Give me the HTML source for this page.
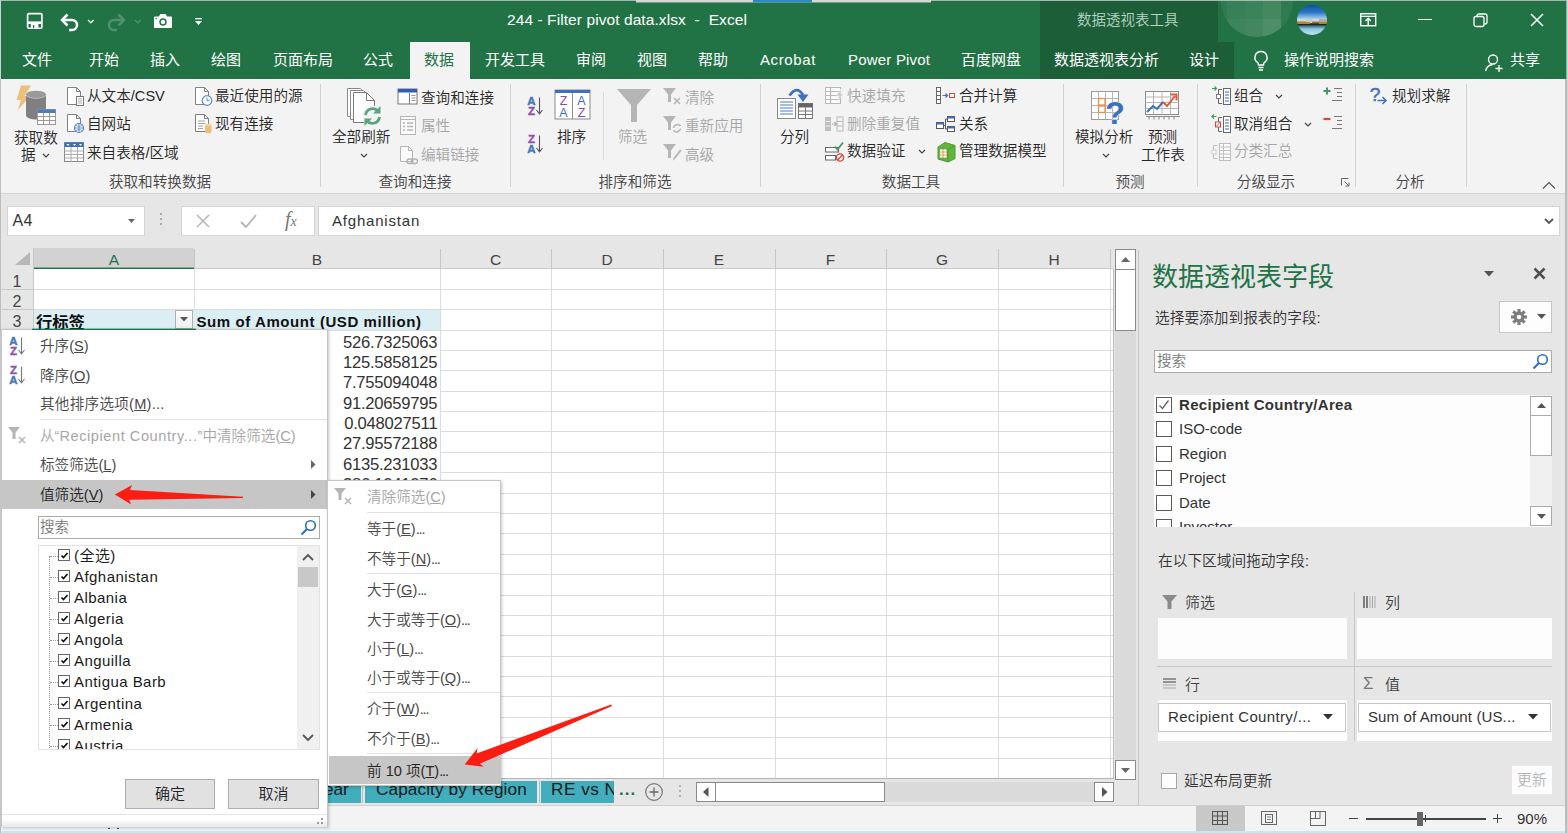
<!DOCTYPE html>
<html lang="zh-CN"><head><meta charset="utf-8"><title>244 - Filter pivot data.xlsx - Excel</title>
<style>
*{box-sizing:border-box;margin:0;padding:0}
html,body{width:1567px;height:833px;overflow:hidden}
body{position:relative;background:#e6e6e6;font-family:"Liberation Sans","Noto Sans CJK SC",sans-serif;font-size:15px;color:#262626;font-weight:350}
.abs,.t{position:absolute;white-space:nowrap}
.t{line-height:20px;height:20px}
#titlebar{position:absolute;left:0;top:0;width:1567px;height:79px;background:#217346}
#ctx{position:absolute;left:1040px;top:0;width:178px;height:79px;background:#1b5e38}
#ctx2{position:absolute;left:1218px;top:42px;width:16px;height:37px;background:#1b5e38}
.tab{position:absolute;top:50px;height:20px;line-height:20px;color:#fff;font-size:15px;white-space:nowrap;font-weight:400}
#acttab{position:absolute;left:410px;top:42px;width:60px;height:38px;background:#f3f3f3}
#ribbon{position:absolute;left:0;top:79px;width:1567px;height:115px;background:#f3f3f3;border-bottom:1px solid #d2d2d2}
.rl{position:absolute;font-size:14.600px;line-height:20px;height:20px;white-space:nowrap;color:#262626}
.dis{color:#a6a6a6}
.gl{position:absolute;top:172px;font-size:14.6px;line-height:20px;height:20px;white-space:nowrap;color:#444;transform:translateX(-50%)}
.gsep{position:absolute;top:84px;width:1px;height:103px;background:#d2d2d2}
</style></head><body>
<div id="titlebar"></div>
<div id="ctx"></div><div id="ctx2"></div>
<div id="acttab"></div>
<div id="ribbon"></div>
<!--TABS-S-->
<div class="abs" style="left:0;top:0;width:1567px;height:1px;background:#a9b8b0"></div>
<div class="abs" style="left:0;top:0;width:1px;height:79px;background:#d3ccd0"></div>
<div class="abs" style="left:636px;top:0;width:295px;height:2px;background:#d6d6d6"></div><div class="abs" style="left:636px;top:2px;width:295px;height:1px;background:#d6d6d6;opacity:.45"></div>
<div class="abs" style="left:753px;top:0;width:59px;height:2px;background:#2e8bc0"></div><div class="abs" style="left:753px;top:2px;width:59px;height:1px;background:#2e8bc0;opacity:.45"></div>
<!-- quick access icons -->
<svg class="abs" style="left:24px;top:11px" width="20" height="20" viewBox="0 0 20 20"><rect x="3.600" y="2.600" width="14.300" height="14.600" rx="1.200" fill="none" stroke="#fff" stroke-width="1.600"/><rect x="3.600" y="10.400" width="14.300" height="2.600" fill="#fff"/><rect x="6.800" y="12.800" width="7.600" height="4.400" fill="#fff"/><rect x="8.900" y="14" width="1.400" height="3.200" fill="#217346"/></svg>
<svg class="abs" style="left:59px;top:11.500px" width="24" height="22" viewBox="0 0 24 22"><path d="M3 8h10a5 5 0 0 1 0 10h-3" fill="none" stroke="#fff" stroke-width="2.500"/><path d="M8.500 2.500 3 8l5.500 5.500" fill="none" stroke="#fff" stroke-width="2.500"/></svg>
<svg class="abs" style="left:87px;top:19px" width="8" height="6" viewBox="0 0 8 6"><path d="M1 1l2.800 2.800L6.600 1" fill="none" stroke="#e3eee8" stroke-width="1.400"/></svg>
<svg class="abs" style="left:103px;top:11.500px" width="24" height="22" viewBox="0 0 24 22"><path d="M21 8H11a5 5 0 0 0 0 10h3" fill="none" stroke="#4f9070" stroke-width="2.500"/><path d="M15.500 2.500 21 8l-5.500 5.500" fill="none" stroke="#4f9070" stroke-width="2.500"/></svg>
<svg class="abs" style="left:134px;top:19px" width="8" height="6" viewBox="0 0 8 6"><path d="M1 1l2.800 2.800L6.600 1" fill="none" stroke="#4f9070" stroke-width="1.400"/></svg>
<svg class="abs" style="left:153px;top:12px" width="20" height="17" viewBox="0 0 20 17"><path d="M2 4.500h4l1.300-2.500h5.400L14 4.500h4a1 1 0 0 1 1 1V15a1 1 0 0 1-1 1H2a1 1 0 0 1-1-1V5.500a1 1 0 0 1 1-1z" fill="#fff"/><circle cx="10" cy="10" r="3.700" fill="#217346"/><circle cx="10" cy="10" r="2.200" fill="#fff"/><circle cx="3.300" cy="6.600" r=".8" fill="#217346"/></svg>
<svg class="abs" style="left:194px;top:18px" width="10" height="8" viewBox="0 0 10 8"><rect x="1" y="0" width="7" height="1.3" fill="#fff"/><path d="M1 3h7L4.5 7z" fill="#fff"/></svg>
<div class="t" style="left:507px;top:10px;color:#fff;font-size:15.5px;letter-spacing:.08px">244 - Filter pivot data.xlsx&nbsp; -&nbsp; Excel</div>
<div class="t" style="left:1077px;top:10px;color:#b9d3c4;font-size:14.5px">数据透视表工具</div>
<!-- blurred name blob -->
<div class="abs" style="left:1221px;top:1px;width:72px;height:36px;border-radius:0 0 36px 36px/0 0 36px 36px;background:#2f7b51;overflow:hidden"><div style="position:absolute;left:6px;top:0;width:18px;height:18px;background:#38805a"></div><div style="position:absolute;left:24px;top:0;width:18px;height:18px;background:#3b835b"></div><div style="position:absolute;left:42px;top:0;width:18px;height:18px;background:#43885f"></div><div style="position:absolute;left:6px;top:18px;width:18px;height:18px;background:#3d845c"></div><div style="position:absolute;left:24px;top:18px;width:18px;height:18px;background:#42875f"></div><div style="position:absolute;left:42px;top:18px;width:18px;height:18px;background:#4d8e68"></div></div>
<!-- avatar -->
<div class="abs" style="left:1297px;top:5px;width:30px;height:30px;border-radius:50%;overflow:hidden;background:linear-gradient(#0f4fa3 0%,#2f78c4 25%,#9ccbea 45%,#d9e8ef 50%,#c9b9a0 54%,#6b5a2a 60%,#1d2a1a 65%,#3f6f86 70%,#8ecbe4 80%,#bfe3f1 100%)"><div style="position:absolute;left:9px;top:14px;width:6px;height:4px;background:#c8ccc9"></div><div style="position:absolute;left:22px;top:14px;width:8px;height:4px;background:#b9a898"></div><div style="position:absolute;left:0;top:17px;width:13px;height:2px;background:#b8862a"></div><div style="position:absolute;left:22px;top:17px;width:8px;height:2px;background:#a88a2a"></div></div>
<!-- window buttons -->
<svg class="abs" style="left:1359px;top:12px" width="18" height="15" viewBox="0 0 18 15"><rect x="1.700" y="1.700" width="15" height="12" fill="none" stroke="#fff" stroke-width="1.400"/><path d="M1.700 4.300h15" stroke="#fff" stroke-width="1.200"/><path d="M9.200 13V6.500M6.500 9l2.700-2.700L11.900 9" fill="none" stroke="#fff" stroke-width="1.400"/></svg>
<div class="abs" style="left:1418px;top:18.500px;width:14px;height:1.500px;background:#fff"></div>
<svg class="abs" style="left:1473px;top:13px" width="15" height="15" viewBox="0 0 15 15"><rect x="1" y="3.500" width="10" height="10" rx="2" fill="none" stroke="#fff" stroke-width="1.3"/><path d="M4 3.500V3a2 2 0 0 1 2-2h6a2 2 0 0 1 2 2v6a2 2 0 0 1-2 2h-.5" fill="none" stroke="#fff" stroke-width="1.3"/></svg>
<svg class="abs" style="left:1530px;top:13px" width="14" height="14" viewBox="0 0 14 14"><path d="M1 1l12 12M13 1 1 13" stroke="#fff" stroke-width="1.5"/></svg>
<!-- tabs -->
<div class="tab" style="left:22px">文件</div>
<div class="tab" style="left:89px">开始</div>
<div class="tab" style="left:150px">插入</div>
<div class="tab" style="left:211px">绘图</div>
<div class="tab" style="left:273px">页面布局</div>
<div class="tab" style="left:363px">公式</div>
<div class="tab" style="left:424px;color:#217346">数据</div>
<div class="tab" style="left:485px">开发工具</div>
<div class="tab" style="left:576px">审阅</div>
<div class="tab" style="left:637px">视图</div>
<div class="tab" style="left:698px">帮助</div>
<div class="tab" style="left:760px;letter-spacing:.6px">Acrobat</div>
<div class="tab" style="left:848px;letter-spacing:.2px">Power Pivot</div>
<div class="tab" style="left:961px">百度网盘</div>
<div class="tab" style="left:1054px">数据透视表分析</div>
<div class="tab" style="left:1189px">设计</div>
<svg class="abs" style="left:1253px;top:50px" width="16" height="22" viewBox="0 0 16 22"><path d="M8 1.500a6 6 0 0 1 3.500 10.900c-.8.700-1 1.600-1 2.600h-5c0-1-.2-1.900-1-2.600A6 6 0 0 1 8 1.500z" fill="none" stroke="#fff" stroke-width="1.400"/><path d="M5.500 17.500h5M6 20h4" stroke="#fff" stroke-width="1.300"/></svg>
<div class="tab" style="left:1284px">操作说明搜索</div>
<svg class="abs" style="left:1484px;top:53px" width="20" height="20" viewBox="0 0 20 20"><circle cx="9" cy="6.500" r="4.500" fill="none" stroke="#fff" stroke-width="1.300"/><path d="M1.500 18c1-4 3.500-6 7-6.500" fill="none" stroke="#fff" stroke-width="1.300"/><path d="M15 12v7M11.500 15.500h7" stroke="#fff" stroke-width="1.300"/></svg>
<div class="tab" style="left:1510px">共享</div>
<!--TABS-E-->
<!--RIBBON-S-->
<!-- group 1 -->
<svg class="abs" style="left:12px;top:84px" width="46" height="46" viewBox="0 0 46 46"><path d="M9 1.500h10l-6.500 10.500h5.500L5.500 26.500l3.500-10.500H4.500z" fill="#eebf78"/><path d="M14 10.500h20v21a10 4 0 0 1-20 0z" fill="#808080"/><ellipse cx="24" cy="10.500" rx="10" ry="3.800" fill="#9a9a9a"/><path d="M14 10.500a10 3.800 0 0 0 20 0" fill="none" stroke="#c4c4c4" stroke-width=".8"/><rect x="25.500" y="25.500" width="18" height="15" fill="#fff" stroke="#9a9a9a"/><rect x="25.500" y="25.500" width="18" height="3.500" fill="#4a7cc0"/><path d="M25.500 32.500h18M25.500 36.500h18M31.500 29v11.500M37.500 29v11.500" stroke="#9a9a9a" stroke-width="1"/></svg>
<div class="rl" style="left:14px;top:128px">获取数</div>
<div class="rl" style="left:21px;top:145px">据</div>
<svg class="abs" style="left:42px;top:153px" width="8" height="6" viewBox="0 0 8 6"><path d="M1 1l3 3 3-3" fill="none" stroke="#444" stroke-width="1.2"/></svg>

<svg class="abs" style="left:66px;top:86px" width="19" height="21" viewBox="0 0 19 21"><path d="M1.500 1.500h9l4 4v13h-13z" fill="#fff" stroke="#808080" stroke-width="1"/><path d="M10.500 1.500v4h4" fill="none" stroke="#808080"/><rect x="10.500" y="10.500" width="7" height="9" fill="#fff" stroke="#777"/><path d="M12 13h4M12 15h4M12 17h4" stroke="#999" stroke-width=".8"/></svg>
<div class="rl" style="left:87px;top:86px">从文本/CSV</div>
<svg class="abs" style="left:66px;top:113px" width="19" height="21" viewBox="0 0 19 21"><path d="M1.500 1.500h9l4 4v13h-13z" fill="#fff" stroke="#808080" stroke-width="1"/><path d="M10.500 1.500v4h4" fill="none" stroke="#808080"/><circle cx="13" cy="15" r="4.500" fill="#fff" stroke="#4a7cc9" stroke-width="1.200"/><path d="M8.500 15h9M13 10.500v9M10 12.500c2 1 4 1 6 0M10 17.500c2-1 4-1 6 0" fill="none" stroke="#4a7cc9" stroke-width=".8"/></svg>
<div class="rl" style="left:87px;top:114px">自网站</div>
<svg class="abs" style="left:64px;top:141.500px" width="21" height="21" viewBox="0 0 21 21"><rect x=".500" y=".500" width="19" height="19" fill="#fff" stroke="#888"/><rect x=".500" y=".500" width="19" height="4.500" fill="#3f6fbf"/><path d="M.500 9h19M.500 12.500h19M.500 16h19M7 5v14.500M13.500 5v14.500" stroke="#aaa" stroke-width="1"/><path d="M2.500 2h3l-1.500 2zM9 2h3l-1.500 2zM15 2h3l-1.500 2z" fill="#fff"/></svg>
<div class="rl" style="left:87px;top:143px">来自表格/区域</div>
<svg class="abs" style="left:194px;top:86px" width="19" height="21" viewBox="0 0 19 21"><path d="M1.500 1.500h9l4 4v13h-13z" fill="#fff" stroke="#808080" stroke-width="1"/><path d="M10.500 1.500v4h4" fill="none" stroke="#808080"/><circle cx="13" cy="14.500" r="4.800" fill="#fff" stroke="#5b8bd0" stroke-width="1.200"/><path d="M13 11.500v3.200h2.500" fill="none" stroke="#5b8bd0" stroke-width="1"/></svg>
<div class="rl" style="left:215px;top:86px">最近使用的源</div>
<svg class="abs" style="left:194px;top:113px" width="19" height="21" viewBox="0 0 19 21"><path d="M1.500 1.500h9l4 4v13h-13z" fill="#fff" stroke="#808080" stroke-width="1"/><path d="M10.500 1.500v4h4" fill="none" stroke="#808080"/><path d="M4 8h7M4 10.500h7M4 13h5M4 15.500h5" stroke="#999" stroke-width=".9"/><path d="M11 12h6.500v7a3.250 1.300 0 0 1-6.500 0z" fill="#eebf7a"/><ellipse cx="14.250" cy="12" rx="3.250" ry="1.300" fill="#f5d39c"/></svg>
<div class="rl" style="left:215px;top:114px">现有连接</div>
<div class="gl" style="left:160px">获取和转换数据</div>
<div class="gsep" style="left:320px"></div>

<!-- group 2 -->
<svg class="abs" style="left:345px;top:86px" width="42" height="44" viewBox="0 0 42 44"><path d="M2.500 2.500h13l5 5v23h-18z" fill="#fff" stroke="#8a8a8a"/><path d="M5.500 4.500h13l5 5v24h-18z" fill="#fff" stroke="#8a8a8a"/><path d="M8.500 6.500h13l8 8v22h-21z" fill="#fff" stroke="#7a7a7a"/><path d="M21.500 6.500v8h8" fill="none" stroke="#7a7a7a"/><circle cx="27.500" cy="30" r="10.500" fill="#f3f3f3"/><path d="M20.500 29a7.200 7.200 0 0 1 12.500-4" fill="none" stroke="#5aa37d" stroke-width="2.800"/><path d="M35.500 20v7.500h-7.500z" fill="#5aa37d"/><path d="M34.500 31a7.200 7.200 0 0 1-12.500 4" fill="none" stroke="#5aa37d" stroke-width="2.800"/><path d="M19.500 40v-7.500h7.500z" fill="#5aa37d"/></svg>
<div class="rl" style="left:332px;top:127px">全部刷新</div>
<svg class="abs" style="left:360px;top:153px" width="8" height="6" viewBox="0 0 8 6"><path d="M1 1l3 3 3-3" fill="none" stroke="#444" stroke-width="1.2"/></svg>
<svg class="abs" style="left:397px;top:88px" width="22" height="18" viewBox="0 0 22 18"><rect x="1" y="1" width="19" height="15" fill="#fff" stroke="#777"/><rect x="1" y="1" width="19" height="3.500" fill="#2f5fb3"/><path d="M12.500 5v11" stroke="#777"/><path d="M14.500 7.500h4M14.500 10h4M14.500 12.500h4" stroke="#888" stroke-width=".9"/></svg>
<div class="rl" style="left:421px;top:87.500px">查询和连接</div>
<svg class="abs" style="left:399px;top:115px" width="19" height="21" viewBox="0 0 19 21"><rect x="1.500" y="1.500" width="15" height="18" fill="#fafafa" stroke="#b5b5b5"/><path d="M1.500 4.500h15" stroke="#b5b5b5"/><path d="M4 8h2M8 8h6M4 11.500h2M8 11.500h6M4 15h2M8 15h6" stroke="#b5b5b5" stroke-width="1.300"/></svg>
<div class="rl dis" style="left:421px;top:116px">属性</div>
<svg class="abs" style="left:399px;top:144.500px" width="21" height="21" viewBox="0 0 21 21"><path d="M1.500 1.500h8l4 4v11h-12z" fill="#fafafa" stroke="#b5b5b5"/><path d="M9.500 1.500v4h4" fill="none" stroke="#b5b5b5"/><rect x="8" y="14" width="6" height="4.500" rx="2.200" fill="none" stroke="#b0b0b0" stroke-width="1.300"/><rect x="12.500" y="14" width="6" height="4.500" rx="2.200" fill="none" stroke="#b0b0b0" stroke-width="1.300"/></svg>
<div class="rl dis" style="left:421px;top:144.500px">编辑链接</div>
<div class="gl" style="left:415px">查询和连接</div>
<div class="gsep" style="left:510px"></div>

<!-- group 3 -->
<svg class="abs" style="left:527px;top:96px" width="20" height="20" viewBox="0 0 20 20"><text x="4.500" y="9" font-size="11.500" font-weight="bold" text-anchor="middle" fill="#4376b8" stroke="#4376b8" stroke-width=".4" font-family="Liberation Sans,sans-serif">A</text><text x="4.500" y="18.500" font-size="11.500" font-weight="bold" text-anchor="middle" fill="#8e4fb0" stroke="#8e4fb0" stroke-width=".4" font-family="Liberation Sans,sans-serif">Z</text><path d="M12.500 1.500v16.500M9.500 14l3 3.800 3-3.800" fill="none" stroke="#555" stroke-width="1.100"/></svg>
<svg class="abs" style="left:527px;top:134px" width="20" height="20" viewBox="0 0 20 20"><text x="4.500" y="9" font-size="11.500" font-weight="bold" text-anchor="middle" fill="#8e4fb0" stroke="#8e4fb0" stroke-width=".4" font-family="Liberation Sans,sans-serif">Z</text><text x="4.500" y="18.500" font-size="11.500" font-weight="bold" text-anchor="middle" fill="#4376b8" stroke="#4376b8" stroke-width=".4" font-family="Liberation Sans,sans-serif">A</text><path d="M12.500 1.500v16.500M9.500 14l3 3.800 3-3.800" fill="none" stroke="#555" stroke-width="1.100"/></svg>
<svg class="abs" style="left:554px;top:89px" width="37" height="32" viewBox="0 0 37 32"><rect x="1" y="1" width="35" height="29" fill="#fff" stroke="#8a8a8a"/><rect x="1" y="1" width="35" height="3" fill="#3f6fbf"/><path d="M18.500 4v26" stroke="#8a8a8a"/><text x="9.500" y="16" font-size="12.500" text-anchor="middle" fill="#8b4aa8" font-family="Liberation Sans,sans-serif">Z</text><text x="9.500" y="28" font-size="12.500" text-anchor="middle" fill="#3b6cb5" font-family="Liberation Sans,sans-serif">A</text><text x="27.500" y="16" font-size="12.500" text-anchor="middle" fill="#3b6cb5" font-family="Liberation Sans,sans-serif">A</text><text x="27.500" y="28" font-size="12.500" text-anchor="middle" fill="#8b4aa8" font-family="Liberation Sans,sans-serif">Z</text></svg>
<div class="rl" style="left:557px;top:127px">排序</div>
<div class="abs" style="left:603px;top:92px;width:1px;height:68px;background:#dcdcdc"></div>
<svg class="abs" style="left:616px;top:88px" width="36" height="36" viewBox="0 0 36 36"><path d="M1 1h34L21 17v17h-6V17z" fill="#b5b5b5"/></svg>
<div class="rl dis" style="left:618px;top:127px">筛选</div>
<svg class="abs" style="left:662px;top:87px" width="22" height="20" viewBox="0 0 22 20"><path d="M1 1h13L9 7.500V15H6V7.500z" fill="#b5b5b5"/><path d="M12 11l6 6M18 11l-6 6" stroke="#b5b5b5" stroke-width="1.600"/></svg>
<div class="rl dis" style="left:685px;top:87.500px">清除</div>
<svg class="abs" style="left:662px;top:115px" width="22" height="20" viewBox="0 0 22 20"><path d="M1 1h13L9 7.500V15H6V7.500z" fill="#b5b5b5"/><path d="M11.500 13a4 4 0 0 1 7-2M18.500 13.500a4 4 0 0 1-7 2" fill="none" stroke="#b5b5b5" stroke-width="1.600"/></svg>
<div class="rl dis" style="left:685px;top:116px">重新应用</div>
<svg class="abs" style="left:662px;top:143px" width="22" height="20" viewBox="0 0 22 20"><path d="M1 1h13L9 7.500V15H6V7.500z" fill="#b5b5b5"/><path d="M18 6l-7 9-1 3 3-1.500 7-9z" fill="#b5b5b5" stroke="#f3f3f3" stroke-width=".8"/></svg>
<div class="rl dis" style="left:685px;top:144.500px">高级</div>
<div class="gl" style="left:635px">排序和筛选</div>
<div class="gsep" style="left:760px"></div>
<!-- group 4 -->
<svg class="abs" style="left:775px;top:86px" width="40" height="36" viewBox="0 0 40 36"><path d="M14.500 9.500Q22 -1 28 9" fill="none" stroke="#3f6fbf" stroke-width="2.800"/><path d="M22.500 8.500h11l-5.500 7.500z" fill="#3f6fbf"/><rect x="2.500" y="12.500" width="18" height="20" fill="#fff" stroke="#888"/><path d="M5 16h13M5 19h13M5 22h13M5 25h13M5 28h13" stroke="#4a7cc9" stroke-width="1.200"/><rect x="23.500" y="17.500" width="14" height="15" fill="#fff" stroke="#777"/><rect x="23.500" y="17.500" width="14" height="4" fill="#666"/><path d="M23.500 25h14M23.500 28.500h14M30.500 21.500v11" stroke="#777"/></svg>
<div class="rl" style="left:780px;top:127px">分列</div>
<svg class="abs" style="left:824px;top:86px" width="20" height="20" viewBox="0 0 20 20"><rect x="1.500" y="1.500" width="15" height="16" fill="#fafafa" stroke="#b8b8b8"/><path d="M1.500 5.500h15M1.500 9.500h15M1.500 13.500h15M6.500 1.500v16" stroke="#b8b8b8"/><path d="M17 3l-5 7h3l-2 6 6-8h-3z" fill="#c9c9c9" stroke="#f3f3f3" stroke-width=".5"/></svg>
<div class="rl dis" style="left:847px;top:86px">快速填充</div>
<svg class="abs" style="left:824px;top:114px" width="20" height="20" viewBox="0 0 20 20"><rect x="1" y="3" width="6" height="14" fill="#c0c0c0"/><rect x="13" y="3" width="6" height="14" fill="none" stroke="#b8b8b8"/><path d="M13 7.500h6M13 12h6" stroke="#b8b8b8"/><path d="M2 7.500h4M2 12h4" stroke="#f3f3f3"/><path d="M8 10h4M10.500 8l2 2-2 2" fill="none" stroke="#b0b0b0" stroke-width="1.200"/></svg>
<div class="rl dis" style="left:847px;top:114px">删除重复值</div>
<svg class="abs" style="left:824px;top:141px" width="22" height="22" viewBox="0 0 22 22"><rect x="1.500" y="6.500" width="13" height="4.500" fill="#fff" stroke="#666"/><rect x="1.500" y="14.500" width="10" height="4.500" fill="#fff" stroke="#666"/><path d="M11 5.500l2.500 3L19 1.500" fill="none" stroke="#3f9b5f" stroke-width="1.800"/><circle cx="16" cy="16.500" r="3.600" fill="#fff" stroke="#d9473a" stroke-width="1.400"/><path d="M13.500 19l5-5" stroke="#d9473a" stroke-width="1.400"/></svg>
<div class="rl" style="left:847px;top:141px">数据验证</div>
<svg class="abs" style="left:918px;top:149px" width="8" height="6" viewBox="0 0 8 6"><path d="M1 1l3 3 3-3" fill="none" stroke="#444" stroke-width="1.200"/></svg>
<svg class="abs" style="left:935px;top:86px" width="22" height="20" viewBox="0 0 22 20"><rect x="1.500" y="1.500" width="4" height="16" fill="#fff" stroke="#666"/><path d="M1.500 5.500h4M1.500 9.500h4M1.500 13.500h4" stroke="#666"/><path d="M7.500 9.500h5M10.500 7.500l2 2-2 2" fill="none" stroke="#3f6fbf" stroke-width="1.200"/><rect x="14.500" y="7.500" width="5" height="4" fill="#fff" stroke="#d9473a"/></svg>
<div class="rl" style="left:959px;top:86px">合并计算</div>
<svg class="abs" style="left:935px;top:114px" width="22" height="20" viewBox="0 0 22 20"><rect x="1.500" y="8.500" width="7" height="6" fill="#fff" stroke="#555"/><rect x="1.500" y="8.500" width="7" height="2" fill="#3f6fbf"/><rect x="12.500" y="2.500" width="7" height="5" fill="#fff" stroke="#555"/><rect x="12.500" y="2.500" width="7" height="2" fill="#3f6fbf"/><rect x="12.500" y="12.500" width="7" height="5" fill="#fff" stroke="#555"/><rect x="12.500" y="12.500" width="7" height="2" fill="#3f6fbf"/><path d="M8.500 11.500h2v-6.500h2M10.500 11.500v3.500h2" fill="none" stroke="#555"/></svg>
<div class="rl" style="left:959px;top:114px">关系</div>
<svg class="abs" style="left:936px;top:141px" width="21" height="22" viewBox="0 0 21 22"><path d="M2 6l7-4.500 10 3v13l-7 3.500-10-3z" fill="#62b53c" stroke="#4a9a2c"/><path d="M12 8.500l7-4" stroke="#4a9a2c"/><path d="M12 8.500v12.500" stroke="#4a9a2c"/><rect x="3.500" y="8" width="7.500" height="9" fill="#fff" stroke="#4a9a2c" stroke-width=".6"/><path d="M3.500 11h7.500M3.500 14h7.500M7 8v9" stroke="#e0933a" stroke-width=".9"/></svg>
<div class="rl" style="left:959px;top:141px">管理数据模型</div>
<div class="gl" style="left:911px">数据工具</div>
<div class="gsep" style="left:1063px"></div>

<!-- group 5 -->
<svg class="abs" style="left:1089px;top:88px" width="40" height="38" viewBox="0 0 40 38"><rect x="2.500" y="3.500" width="27" height="28" fill="#fff" stroke="#9a9a9a"/><path d="M2.500 10.500h27M2.500 17.500h27M2.500 24.500h27M9.500 3.500v28M16.500 3.500v28M23.500 3.500v28" stroke="#b5b5b5"/><rect x="9.500" y="10.500" width="6.500" height="6.500" fill="#fff" stroke="#e8924a" stroke-width="1.300"/><rect x="9.500" y="18" width="6.500" height="6.500" fill="#fff" stroke="#e8924a" stroke-width="1.300"/><text x="26" y="35.500" font-size="32" font-weight="bold" text-anchor="middle" fill="#3f6fbf" stroke="#f3f3f3" stroke-width="1" paint-order="stroke" font-family="Liberation Sans,sans-serif">?</text></svg>
<div class="rl" style="left:1075px;top:127px">模拟分析</div>
<svg class="abs" style="left:1102px;top:153px" width="8" height="6" viewBox="0 0 8 6"><path d="M1 1l3 3 3-3" fill="none" stroke="#444" stroke-width="1.200"/></svg>
<svg class="abs" style="left:1144px;top:90px" width="38" height="34" viewBox="0 0 38 34"><rect x="1.500" y="1.500" width="33" height="23" fill="#fff" stroke="#8a8a8a"/><path d="M1.500 7h33M1.500 12.500h33M1.500 18.500h33M9.500 1.500v23M18 1.500v23M26.500 1.500v23" stroke="#b5b5b5"/><path d="M2 26.500h34M5 26.500v3M10 26.500v3M15 26.500v3M20 26.500v3M25 26.500v3M30 26.500v3" stroke="#8a8a8a"/><path d="M3 22l6-6 4 3 6-7" fill="none" stroke="#3f6fbf" stroke-width="2"/><path d="M19 12l4 4 8-10" fill="none" stroke="#e0573a" stroke-width="2"/><path d="M26.500 4.500h6v6" fill="none" stroke="#e0573a" stroke-width="2"/></svg>
<div class="rl" style="left:1148px;top:127px">预测</div>
<div class="rl" style="left:1141px;top:145px">工作表</div>
<div class="gl" style="left:1130px">预测</div>
<div class="gsep" style="left:1197px"></div>

<!-- group 6 -->
<svg class="abs" style="left:1211px;top:85px" width="22" height="22" viewBox="0 0 22 22"><rect x="12.500" y="3.500" width="7" height="16" fill="#fff" stroke="#666"/><path d="M14 7h4M14 10h4M14 13h4M14 16h4" stroke="#3f6fbf" stroke-width="1.100"/><path d="M11 4.500h-3.500v14h3.500" fill="none" stroke="#666"/><rect x="5.500" y="9.500" width="4" height="4" fill="#fff" stroke="#666" stroke-width=".8"/><path d="M1 3.500h4M3.500 1.500l2 2-2 2" fill="none" stroke="#3f9b5f" stroke-width="1.200"/></svg>
<div class="rl" style="left:1234px;top:86px">组合</div>
<svg class="abs" style="left:1275px;top:94px" width="8" height="6" viewBox="0 0 8 6"><path d="M1 1l3 3 3-3" fill="none" stroke="#444" stroke-width="1.200"/></svg>
<svg class="abs" style="left:1211px;top:113px" width="22" height="22" viewBox="0 0 22 22"><rect x="12.500" y="3.500" width="7" height="16" fill="#fff" stroke="#666"/><path d="M14 7h4M14 10h4M14 13h4M14 16h4" stroke="#3f6fbf" stroke-width="1.100"/><path d="M11 4.500h-3.500v14h3.500" fill="none" stroke="#666"/><rect x="4.500" y="9" width="5" height="5" fill="#fff" stroke="#d9473a" stroke-width="1"/><path d="M5 13.500l4-4" stroke="#d9473a"/><path d="M5.500 3.500h-4M3 1.500l-2 2 2 2" fill="none" stroke="#3f9b5f" stroke-width="1.200"/></svg>
<div class="rl" style="left:1234px;top:114px">取消组合</div>
<svg class="abs" style="left:1304px;top:122px" width="8" height="6" viewBox="0 0 8 6"><path d="M1 1l3 3 3-3" fill="none" stroke="#444" stroke-width="1.200"/></svg>
<svg class="abs" style="left:1211px;top:141px" width="22" height="22" viewBox="0 0 22 22"><rect x="8.500" y="2.500" width="11" height="17" fill="#fafafa" stroke="#c0c0c0"/><path d="M8.500 6h11M8.500 9.500h11M8.500 13h11M8.500 16.500h11M12.500 2.500v17" stroke="#c0c0c0"/><path d="M6.500 4.500h-4v13h4" fill="none" stroke="#c0c0c0"/><rect x="1" y="9" width="4" height="4" fill="#fafafa" stroke="#c0c0c0" stroke-width=".8"/></svg>
<div class="rl dis" style="left:1234px;top:141px">分类汇总</div>
<svg class="abs" style="left:1322px;top:86px" width="21" height="18" viewBox="0 0 21 18"><path d="M5 1.500v7M1.500 5h7" stroke="#3f9b5f" stroke-width="2"/><path d="M12 2.500h8M15 6.500h5M15 10.500h5M10 14.500h10" stroke="#777" stroke-width="1.100"/></svg>
<svg class="abs" style="left:1322px;top:114px" width="21" height="18" viewBox="0 0 21 18"><path d="M1.500 5h7" stroke="#d9473a" stroke-width="2.200"/><path d="M12 2.500h8M15 6.500h5M15 10.500h5M10 14.500h10" stroke="#777" stroke-width="1.100"/></svg>
<div class="gl" style="left:1266px">分级显示</div>
<svg class="abs" style="left:1341px;top:178px" width="9" height="9" viewBox="0 0 9 9"><path d="M.500 7.500V.500h7" fill="none" stroke="#666"/><path d="M3.500 3.500l4 4M8 4.500v3.500h-3.500" fill="none" stroke="#666"/></svg>
<div class="gsep" style="left:1355px"></div>

<!-- group 7 -->
<svg class="abs" style="left:1368px;top:85px" width="22" height="22" viewBox="0 0 22 22"><text x="7" y="15.500" font-size="19" text-anchor="middle" fill="#3f6fbf" stroke="#3f6fbf" stroke-width=".5" font-family="Liberation Sans,sans-serif">?</text><path d="M9.500 15.500h8.500M14.500 12l3.500 3.500-3.500 3.500" fill="none" stroke="#3f6fbf" stroke-width="1.500"/></svg>
<div class="rl" style="left:1392px;top:86px">规划求解</div>
<div class="gl" style="left:1410px">分析</div>
<div class="gsep" style="left:1466px"></div>
<svg class="abs" style="left:1542px;top:181px" width="14" height="9" viewBox="0 0 14 9"><path d="M1 7.500l6-6 6 6" fill="none" stroke="#555" stroke-width="1.200"/></svg>

<!--RIBBON-E-->
<!--FORMULA-->
<!--GRID-S-->
<div class="abs" style="left:7px;top:206px;width:138px;height:30px;background:#fff;border:1px solid #d4d4d4"></div>
<div class="t" style="left:12.500px;top:211px;font-size:16px;color:#333;letter-spacing:.3px">A4</div>
<svg class="abs" style="left:128px;top:219px" width="8" height="5" viewBox="0 0 8 5"><path d="M0 0h7L3.500 4z" fill="#666"/></svg>
<div class="abs" style="left:160px;top:213px;width:2px;height:2px;background:#aaa;box-shadow:0 5px 0 #aaa,0 10px 0 #aaa"></div>
<div class="abs" style="left:181px;top:206px;width:134px;height:30px;background:#fff;border:1px solid #d4d4d4"></div>
<svg class="abs" style="left:196px;top:214px" width="14" height="14" viewBox="0 0 14 14"><path d="M1 1l12 12M13 1 1 13" stroke="#b4b4b4" stroke-width="1.500"/></svg>
<svg class="abs" style="left:240px;top:214px" width="17" height="14" viewBox="0 0 17 14"><path d="M1 8l5 5L16 1" fill="none" stroke="#b4b4b4" stroke-width="1.800"/></svg>
<div class="t" style="left:285px;top:209px;font-family:'Liberation Serif',serif;font-style:italic;font-size:20px;color:#777;font-weight:400">f<span style="font-size:14px">x</span></div>
<div class="abs" style="left:318px;top:206px;width:1242px;height:30px;background:#fff;border:1px solid #d4d4d4"></div>
<div class="t" style="left:332px;top:211px;font-size:15px;color:#333;letter-spacing:.8px">Afghanistan</div>
<svg class="abs" style="left:1544px;top:218px" width="10" height="7" viewBox="0 0 10 7"><path d="M1 1l4 4 4-4" fill="none" stroke="#555" stroke-width="1.800"/></svg>
<div class="abs" style="left:2px;top:248px;width:1111px;height:530px;background:#fff"></div>
<div class="abs" style="left:2px;top:248px;width:1111px;height:21px;background:#e6e6e6;border-bottom:1px solid #c8c8c8"></div>
<div class="abs" style="left:2px;top:248px;width:32px;height:530px;background:#e6e6e6;border-right:1px solid #c8c8c8"></div>
<svg class="abs" style="left:14px;top:252px" width="17" height="14" viewBox="0 0 17 14"><path d="M16 0v13H1z" fill="#b8b8b8"/></svg>
<div class="abs" style="left:34px;top:248px;width:160px;height:20px;background:#d2d2d2"></div>
<div class="abs" style="left:34px;top:268px;width:160px;height:1px;background:#217346"></div><div class="abs" style="left:34px;top:267px;width:160px;height:1px;background:#217346;opacity:.45"></div>
<div class="t" style="left:94.0px;top:250px;width:40px;text-align:center;font-size:15.500px;color:#217346">A</div>
<div class="abs" style="left:194px;top:249px;width:1px;height:20px;background:#c6c6c6"></div>
<div class="t" style="left:297.0px;top:250px;width:40px;text-align:center;font-size:15.500px;color:#444">B</div>
<div class="abs" style="left:440px;top:249px;width:1px;height:20px;background:#c6c6c6"></div>
<div class="t" style="left:475.5px;top:250px;width:40px;text-align:center;font-size:15.500px;color:#444">C</div>
<div class="abs" style="left:551px;top:249px;width:1px;height:20px;background:#c6c6c6"></div>
<div class="t" style="left:587.0px;top:250px;width:40px;text-align:center;font-size:15.500px;color:#444">D</div>
<div class="abs" style="left:663px;top:249px;width:1px;height:20px;background:#c6c6c6"></div>
<div class="t" style="left:699.0px;top:250px;width:40px;text-align:center;font-size:15.500px;color:#444">E</div>
<div class="abs" style="left:775px;top:249px;width:1px;height:20px;background:#c6c6c6"></div>
<div class="t" style="left:810.5px;top:250px;width:40px;text-align:center;font-size:15.500px;color:#444">F</div>
<div class="abs" style="left:886px;top:249px;width:1px;height:20px;background:#c6c6c6"></div>
<div class="t" style="left:922.0px;top:250px;width:40px;text-align:center;font-size:15.500px;color:#444">G</div>
<div class="abs" style="left:998px;top:249px;width:1px;height:20px;background:#c6c6c6"></div>
<div class="t" style="left:1034.0px;top:250px;width:40px;text-align:center;font-size:15.500px;color:#444">H</div>
<div class="abs" style="left:1110px;top:249px;width:1px;height:20px;background:#c6c6c6"></div>
<div class="abs" style="left:34px;top:289px;width:1079px;height:1px;background:#dcdcdc"></div>
<div class="abs" style="left:34px;top:309px;width:1079px;height:1px;background:#dcdcdc"></div>
<div class="abs" style="left:34px;top:330px;width:1079px;height:1px;background:#dcdcdc"></div>
<div class="abs" style="left:34px;top:350px;width:1079px;height:1px;background:#dcdcdc"></div>
<div class="abs" style="left:34px;top:370px;width:1079px;height:1px;background:#dcdcdc"></div>
<div class="abs" style="left:34px;top:391px;width:1079px;height:1px;background:#dcdcdc"></div>
<div class="abs" style="left:34px;top:411px;width:1079px;height:1px;background:#dcdcdc"></div>
<div class="abs" style="left:34px;top:431px;width:1079px;height:1px;background:#dcdcdc"></div>
<div class="abs" style="left:34px;top:452px;width:1079px;height:1px;background:#dcdcdc"></div>
<div class="abs" style="left:34px;top:472px;width:1079px;height:1px;background:#dcdcdc"></div>
<div class="abs" style="left:34px;top:493px;width:1079px;height:1px;background:#dcdcdc"></div>
<div class="abs" style="left:34px;top:513px;width:1079px;height:1px;background:#dcdcdc"></div>
<div class="abs" style="left:34px;top:533px;width:1079px;height:1px;background:#dcdcdc"></div>
<div class="abs" style="left:34px;top:554px;width:1079px;height:1px;background:#dcdcdc"></div>
<div class="abs" style="left:34px;top:574px;width:1079px;height:1px;background:#dcdcdc"></div>
<div class="abs" style="left:34px;top:595px;width:1079px;height:1px;background:#dcdcdc"></div>
<div class="abs" style="left:34px;top:615px;width:1079px;height:1px;background:#dcdcdc"></div>
<div class="abs" style="left:34px;top:635px;width:1079px;height:1px;background:#dcdcdc"></div>
<div class="abs" style="left:34px;top:656px;width:1079px;height:1px;background:#dcdcdc"></div>
<div class="abs" style="left:34px;top:676px;width:1079px;height:1px;background:#dcdcdc"></div>
<div class="abs" style="left:34px;top:696px;width:1079px;height:1px;background:#dcdcdc"></div>
<div class="abs" style="left:34px;top:717px;width:1079px;height:1px;background:#dcdcdc"></div>
<div class="abs" style="left:34px;top:737px;width:1079px;height:1px;background:#dcdcdc"></div>
<div class="abs" style="left:34px;top:758px;width:1079px;height:1px;background:#dcdcdc"></div>
<div class="abs" style="left:194px;top:269px;width:1px;height:509px;background:#dcdcdc"></div>
<div class="abs" style="left:440px;top:269px;width:1px;height:509px;background:#dcdcdc"></div>
<div class="abs" style="left:551px;top:269px;width:1px;height:509px;background:#dcdcdc"></div>
<div class="abs" style="left:663px;top:269px;width:1px;height:509px;background:#dcdcdc"></div>
<div class="abs" style="left:775px;top:269px;width:1px;height:509px;background:#dcdcdc"></div>
<div class="abs" style="left:886px;top:269px;width:1px;height:509px;background:#dcdcdc"></div>
<div class="abs" style="left:998px;top:269px;width:1px;height:509px;background:#dcdcdc"></div>
<div class="abs" style="left:1110px;top:269px;width:1px;height:509px;background:#dcdcdc"></div>
<div class="t" style="left:2px;top:272px;width:30px;text-align:center;font-size:16px;color:#444">1</div>
<div class="abs" style="left:2px;top:289px;width:32px;height:1px;background:#c8c8c8"></div>
<div class="t" style="left:2px;top:292px;width:30px;text-align:center;font-size:16px;color:#444">2</div>
<div class="abs" style="left:2px;top:309px;width:32px;height:1px;background:#c8c8c8"></div>
<div class="t" style="left:2px;top:312px;width:30px;text-align:center;font-size:16px;color:#444">3</div>
<div class="abs" style="left:2px;top:330px;width:32px;height:1px;background:#c8c8c8"></div>
<div class="abs" style="left:34px;top:310px;width:406px;height:20px;background:#daeef3"></div>
<div class="t" style="left:36px;top:312px;font-size:16.300px;font-weight:bold;color:#111">行标签</div>
<div class="abs" style="left:175px;top:310px;width:18px;height:19px;background:linear-gradient(#fff,#eee);border:1px solid #b0b0b0"></div>
<svg class="abs" style="left:180px;top:317px" width="9" height="5" viewBox="0 0 9 5"><path d="M0 0h8L4 4.500z" fill="#555"/></svg>
<div class="t" style="left:196.500px;top:312px;font-size:15px;font-weight:bold;color:#111;letter-spacing:.58px">Sum of Amount (USD million)</div>
<div class="abs" style="left:195px;top:331px;width:245px;height:447px;background:#fff"></div>
<div class="t" style="left:320px;top:333px;width:117.400px;text-align:right;font-size:16.600px;color:#333;height:19px;line-height:19px;letter-spacing:-.22px">526.7325063</div>
<div class="t" style="left:320px;top:353px;width:117.400px;text-align:right;font-size:16.600px;color:#333;height:19px;line-height:19px;letter-spacing:-.22px">125.5858125</div>
<div class="t" style="left:320px;top:373px;width:117.400px;text-align:right;font-size:16.600px;color:#333;height:19px;line-height:19px;letter-spacing:-.22px">7.755094048</div>
<div class="t" style="left:320px;top:394px;width:117.400px;text-align:right;font-size:16.600px;color:#333;height:19px;line-height:19px;letter-spacing:-.22px">91.20659795</div>
<div class="t" style="left:320px;top:414px;width:117.400px;text-align:right;font-size:16.600px;color:#333;height:19px;line-height:19px;letter-spacing:-.22px">0.048027511</div>
<div class="t" style="left:320px;top:434px;width:117.400px;text-align:right;font-size:16.600px;color:#333;height:19px;line-height:19px;letter-spacing:-.22px">27.95572188</div>
<div class="t" style="left:320px;top:455px;width:117.400px;text-align:right;font-size:16.600px;color:#333;height:19px;line-height:19px;letter-spacing:-.22px">6135.231033</div>
<div class="t" style="left:320px;top:475px;width:117.400px;text-align:right;font-size:16.600px;color:#333;height:19px;line-height:19px;letter-spacing:-.22px">386.1041076</div>
<div class="abs" style="left:1113px;top:248px;width:25px;height:531px;background:#e6e6e6"></div>
<div class="abs" style="left:1115px;top:269px;width:21px;height:491px;background:#dadada"></div>
<div class="abs" style="left:1115px;top:249px;width:21px;height:21px;background:#fff;border:1px solid #8a8a8a"></div>
<svg class="abs" style="left:1121px;top:257px" width="9" height="5" viewBox="0 0 9 5"><path d="M0 5h9L4.500 0z" fill="#666"/></svg>
<div class="abs" style="left:1115px;top:269px;width:21px;height:62px;background:#fff;border:1px solid #8a8a8a"></div>
<div class="abs" style="left:1115px;top:760px;width:21px;height:20px;background:#fff;border:1px solid #8a8a8a"></div>
<svg class="abs" style="left:1121px;top:768px" width="9" height="5" viewBox="0 0 9 5"><path d="M0 0h9L4.500 5z" fill="#666"/></svg>
<div class="abs" style="left:1138px;top:250px;width:1px;height:555px;background:#c6c6c6"></div>
<div class="abs" style="left:1113px;top:269px;width:1px;height:510px;background:#bcbcbc"></div>
<div class="abs" style="left:2px;top:778px;width:1112px;height:27px;background:#e6e6e6;border-top:1px solid #b4b4b4"></div>
<div class="abs" style="left:300px;top:781px;width:61px;height:22px;background:#41adbd;overflow:hidden"><div class="t" style="left:24px;top:-4px;font-size:17.200px;color:#1a1a1a;line-height:24px;height:24px;font-weight:400">ear</div></div>
<div class="abs" style="left:365px;top:781px;width:172px;height:22px;background:#41adbd;overflow:hidden"><div class="t" style="left:11px;top:-4px;font-size:17.200px;color:#1a1a1a;line-height:24px;height:24px;font-weight:400;letter-spacing:.1px">Capacity by Region</div></div>
<div class="abs" style="left:541px;top:781px;width:73px;height:22px;background:#41adbd;overflow:hidden"><div class="t" style="left:10px;top:-4px;font-size:17.200px;color:#1a1a1a;line-height:24px;height:24px;font-weight:400;letter-spacing:.5px">RE vs No</div></div>
<div class="abs" style="left:362px;top:781px;width:1px;height:22px;background:#bdbdbd"></div><div class="abs" style="left:539px;top:781px;width:1px;height:22px;background:#bdbdbd"></div>
<div class="t" style="left:619px;top:780px;font-size:17px;font-weight:bold;color:#217346;letter-spacing:1px">...</div>
<svg class="abs" style="left:644px;top:782px" width="20" height="20" viewBox="0 0 20 20"><circle cx="10" cy="10" r="8.300" fill="none" stroke="#777" stroke-width="1.200"/><path d="M10 5.500v9M5.500 10h9" stroke="#666" stroke-width="1.300"/></svg>
<div class="abs" style="left:679px;top:785px;width:2px;height:2px;background:#b4b4b4;box-shadow:0 5px 0 #b4b4b4,0 10px 0 #b4b4b4"></div>
<div class="abs" style="left:696px;top:782px;width:418px;height:20px;background:#dadada"></div>
<div class="abs" style="left:696px;top:782px;width:20px;height:20px;background:#fff;border:1px solid #8a8a8a"></div>
<svg class="abs" style="left:703px;top:787px" width="6" height="10" viewBox="0 0 6 10"><path d="M5.500 0v10L0 5z" fill="#555"/></svg>
<div class="abs" style="left:715px;top:782px;width:170px;height:20px;background:#fff;border:1px solid #8a8a8a"></div>
<div class="abs" style="left:1094px;top:782px;width:20px;height:20px;background:#fff;border:1px solid #8a8a8a"></div>
<svg class="abs" style="left:1102px;top:787px" width="6" height="10" viewBox="0 0 6 10"><path d="M0 0v10l5.500-5z" fill="#555"/></svg>
<!--GRID-E-->
<!--PANE-S-->
<div class="abs" style="left:1139px;top:246px;width:428px;height:559px;background:#e6e6e6"></div>
<div class="t" style="left:1152px;top:259px;height:36px;line-height:36px;font-size:26px;color:#217346;font-weight:400">数据透视表字段</div>
<svg class="abs" style="left:1484px;top:271px" width="10" height="6" viewBox="0 0 10 6"><path d="M0 0h10L5 5.500z" fill="#555"/></svg>
<svg class="abs" style="left:1533px;top:267px" width="13" height="13" viewBox="0 0 13 13"><path d="M1.500 1.500l10 10M11.500 1.500l-10 10" stroke="#505050" stroke-width="2.500"/></svg>
<div class="t" style="left:1155px;top:308px;font-size:14.700px;color:#333">选择要添加到报表的字段:</div>
<div class="abs" style="left:1499px;top:301px;width:53px;height:32px;background:#fdfdfd;border:1px solid #c6c6c6"></div>
<svg class="abs" style="left:1511px;top:309px" width="16" height="16" viewBox="0 0 16 16"><g fill="#7d7d7d"><circle cx="8" cy="8" r="5.400"/><g id="gt"><rect x="6.400" y="0" width="3.200" height="16"/></g><rect x="6.400" y="0" width="3.200" height="16" transform="rotate(45 8 8)"/><rect x="6.400" y="0" width="3.200" height="16" transform="rotate(90 8 8)"/><rect x="6.400" y="0" width="3.200" height="16" transform="rotate(135 8 8)"/></g><circle cx="8" cy="8" r="2.300" fill="#fdfdfd"/></svg>
<svg class="abs" style="left:1537px;top:314px" width="10" height="6" viewBox="0 0 10 6"><path d="M0 0h9L4.500 5z" fill="#555"/></svg>
<div class="abs" style="left:1154px;top:350px;width:398px;height:23px;background:#fff;border:1px solid #ababab"></div>
<div class="t" style="left:1157px;top:351px;font-size:14.500px;color:#777">搜索</div>
<svg class="abs" style="left:1532px;top:353px" width="17" height="17" viewBox="0 0 17 17"><circle cx="10.500" cy="6.500" r="4.800" fill="none" stroke="#2b6cc4" stroke-width="1.600"/><path d="M7 10l-5.500 5.500" stroke="#2b6cc4" stroke-width="2"/></svg>
<div class="abs" style="left:1154px;top:395px;width:398px;height:132px;background:#fdfdfd;overflow:hidden">
<div class="abs" style="left:2px;top:2.0px;width:16px;height:16px;background:#fff;border:1px solid #5a5a5a"></div>
<svg class="abs" style="left:4px;top:4.0px" width="12" height="12" viewBox="0 0 12 12"><path d="M1.500 6.500l3 3 6-8" fill="none" stroke="#666" stroke-width="1.300"/></svg>
<div class="t" style="left:25px;top:0.0px;font-size:15px;font-weight:bold;color:#333;letter-spacing:.3px">Recipient Country/Area</div>
<div class="abs" style="left:2px;top:26.4px;width:16px;height:16px;background:#fff;border:1px solid #5a5a5a"></div>
<div class="t" style="left:25px;top:24.4px;font-size:15px;font-weight:350;color:#333">ISO-code</div>
<div class="abs" style="left:2px;top:50.8px;width:16px;height:16px;background:#fff;border:1px solid #5a5a5a"></div>
<div class="t" style="left:25px;top:48.8px;font-size:15px;font-weight:350;color:#333">Region</div>
<div class="abs" style="left:2px;top:75.2px;width:16px;height:16px;background:#fff;border:1px solid #5a5a5a"></div>
<div class="t" style="left:25px;top:73.2px;font-size:15px;font-weight:350;color:#333">Project</div>
<div class="abs" style="left:2px;top:99.6px;width:16px;height:16px;background:#fff;border:1px solid #5a5a5a"></div>
<div class="t" style="left:25px;top:97.6px;font-size:15px;font-weight:350;color:#333">Date</div>
<div class="abs" style="left:2px;top:124.0px;width:16px;height:16px;background:#fff;border:1px solid #5a5a5a"></div>
<div class="t" style="left:25px;top:122.0px;font-size:15px;font-weight:350;color:#333">Investor</div>
<div class="abs" style="left:376px;top:0;width:22px;height:131px;background:#f0f0f0"></div>
<div class="abs" style="left:376px;top:1px;width:22px;height:20px;background:#fff;border:1px solid #ababab"></div>
<svg class="abs" style="left:383px;top:8px" width="9" height="5" viewBox="0 0 9 5"><path d="M0 5h9L4.500 0z" fill="#555"/></svg>
<div class="abs" style="left:376px;top:20px;width:22px;height:41px;background:#fff;border:1px solid #ababab"></div>
<div class="abs" style="left:376px;top:111px;width:22px;height:20px;background:#fff;border:1px solid #ababab"></div>
<svg class="abs" style="left:383px;top:119px" width="9" height="5" viewBox="0 0 9 5"><path d="M0 0h9L4.500 5z" fill="#555"/></svg>
</div>
<div class="t" style="left:1158px;top:551px;font-size:14.700px;color:#333">在以下区域间拖动字段:</div>
<svg class="abs" style="left:1162px;top:595px" width="16" height="15" viewBox="0 0 16 15"><path d="M0 0h15L9.500 6.500V14h-4V6.500z" fill="#8a8a8a"/></svg>
<div class="t" style="left:1185px;top:593px;font-size:15px;color:#444">筛选</div>
<div class="abs" style="left:1158px;top:618px;width:189px;height:41px;background:#fdfdfd"></div>
<div class="abs" style="left:1354px;top:592px;width:1px;height:149px;background:#c8c8c8"></div>
<svg class="abs" style="left:1363px;top:596px" width="14" height="12" viewBox="0 0 14 12"><path d="M1 0v12M4 0v12" stroke="#666" stroke-width="1.600"/><path d="M7 0v12M9.500 0v12M12 0v12" stroke="#aaa" stroke-width="1"/></svg>
<div class="t" style="left:1385px;top:593px;font-size:15px;color:#444">列</div>
<div class="abs" style="left:1357px;top:618px;width:195px;height:41px;background:#fdfdfd"></div>
<div class="abs" style="left:1157px;top:666px;width:395px;height:1px;background:#c8c8c8"></div>
<svg class="abs" style="left:1163px;top:678px" width="14" height="12" viewBox="0 0 14 12"><path d="M0 1h13M0 4h13" stroke="#777" stroke-width="1.400"/><path d="M0 7h13M0 10h13" stroke="#aaa" stroke-width="1"/></svg>
<div class="t" style="left:1185px;top:675px;font-size:15px;color:#444">行</div>
<div class="t" style="left:1363px;top:674px;font-size:17px;color:#777;font-weight:400">Σ</div>
<div class="t" style="left:1385px;top:675px;font-size:15px;color:#444">值</div>
<div class="abs" style="left:1158px;top:700px;width:189px;height:41px;background:#fdfdfd"></div>
<div class="abs" style="left:1357px;top:700px;width:195px;height:41px;background:#fdfdfd"></div>
<div class="abs" style="left:1158px;top:703px;width:188px;height:29px;background:#fff;border:1px solid #c6c6c6"></div>
<div class="t" style="left:1168px;top:707px;font-size:15px;color:#333;letter-spacing:.35px">Recipient Country/...</div>
<svg class="abs" style="left:1323px;top:714px" width="10" height="6" viewBox="0 0 10 6"><path d="M0 0h10L5 5.500z" fill="#333"/></svg>
<div class="abs" style="left:1358px;top:703px;width:193px;height:29px;background:#fff;border:1px solid #c6c6c6"></div>
<div class="t" style="left:1368px;top:707px;font-size:15px;color:#333;letter-spacing:.12px">Sum of Amount (US...</div>
<svg class="abs" style="left:1528px;top:714px" width="10" height="6" viewBox="0 0 10 6"><path d="M0 0h10L5 5.500z" fill="#333"/></svg>
<div class="abs" style="left:1161px;top:773px;width:16px;height:16px;background:#fdfdfd;border:1px solid #a6a6a6"></div>
<div class="t" style="left:1184px;top:771px;font-size:14.700px;color:#333">延迟布局更新</div>
<div class="abs" style="left:1512px;top:766px;width:40px;height:28px;background:#fdfdfd"></div>
<div class="t" style="left:1517px;top:770px;font-size:14.700px;color:#b4b4b4">更新</div>
<!--PANE-E-->
<!--STATUS-S-->
<div class="abs" style="left:0;top:805px;width:1567px;height:28px;background:#f3f3f3;border-top:1px solid #d0d0d0"></div>
<div class="abs" style="left:0;top:831px;width:1567px;height:2px;background:#cfe5ee"></div>
<div class="abs" style="left:1196px;top:806px;width:49px;height:25px;background:#c8c8c8"></div>
<svg class="abs" style="left:1212px;top:811px" width="17" height="15" viewBox="0 0 17 15"><rect x=".500" y=".500" width="15" height="13" fill="none" stroke="#555"/><path d="M.500 5h15M.500 9.500h15M5.500 .500v13M10.500 .500v13" stroke="#555"/></svg>
<svg class="abs" style="left:1261px;top:811px" width="17" height="15" viewBox="0 0 17 15"><rect x=".500" y=".500" width="15" height="13" fill="none" stroke="#666"/><rect x="4.500" y="3.500" width="7" height="8" fill="none" stroke="#666"/><path d="M6 6h4M6 8.500h4" stroke="#666" stroke-width=".8"/></svg>
<svg class="abs" style="left:1310px;top:811px" width="17" height="15" viewBox="0 0 17 15"><rect x=".500" y=".500" width="15" height="14" fill="none" stroke="#666"/><path d="M.500 7.500h9.500v-7M5.500 .500v7" fill="none" stroke="#666"/></svg>
<div class="abs" style="left:1349px;top:818px;width:9px;height:1px;background:#444"></div>
<div class="abs" style="left:1366px;top:818px;width:120px;height:1.500px;background:#444"></div>
<div class="abs" style="left:1417px;top:812px;width:6px;height:14px;background:#666"></div>
<div class="abs" style="left:1425px;top:815px;width:1px;height:7px;background:#444"></div>
<div class="abs" style="left:1493px;top:818px;width:9px;height:1px;background:#444"></div><div class="abs" style="left:1497px;top:814px;width:1px;height:9px;background:#444"></div>
<div class="t" style="left:1517px;top:809px;font-size:15px;color:#333">90%</div>
<div class="abs" style="left:0;top:79px;width:1px;height:754px;background:#bdbdbd"></div><div class="abs" style="left:1565px;top:79px;width:2px;height:754px;background:#bcbcbc"></div><div class="abs" style="left:1566px;top:1px;width:1px;height:78px;background:#8fb3a0"></div>
<div class="abs" style="left:108px;top:828px;width:2px;height:1px;background:#444"></div><div class="abs" style="left:117px;top:828px;width:2px;height:1px;background:#444"></div>
<!--STATUS-E-->
<!--MENU-S-->
<div class="abs" style="left:1px;top:329px;width:327px;height:498px;background:#fff;border:1px solid #c6c6c6;box-shadow:1px 1px 3px rgba(0,0,0,.22)"></div>
<div class="abs" style="left:0;top:330px;width:2px;height:497px;background:#c6c6c6"></div>
<svg class="abs" style="left:9px;top:336px" width="20" height="20" viewBox="0 0 20 20"><text x="4.500" y="9" font-size="11.500" font-weight="bold" text-anchor="middle" fill="#4376b8" stroke="#4376b8" stroke-width=".4" font-family="Liberation Sans,sans-serif">A</text><text x="4.500" y="18.500" font-size="11.500" font-weight="bold" text-anchor="middle" fill="#8e4fb0" stroke="#8e4fb0" stroke-width=".4" font-family="Liberation Sans,sans-serif">Z</text><path d="M12.500 1.500v16.500M9.500 14l3 3.800 3-3.800" fill="none" stroke="#777" stroke-width="1.100"/></svg>
<svg class="abs" style="left:9px;top:365px" width="20" height="20" viewBox="0 0 20 20"><text x="4.500" y="9" font-size="11.500" font-weight="bold" text-anchor="middle" fill="#8e4fb0" stroke="#8e4fb0" stroke-width=".4" font-family="Liberation Sans,sans-serif">Z</text><text x="4.500" y="18.500" font-size="11.500" font-weight="bold" text-anchor="middle" fill="#4376b8" stroke="#4376b8" stroke-width=".4" font-family="Liberation Sans,sans-serif">A</text><path d="M12.500 1.500v16.500M9.500 14l3 3.800 3-3.800" fill="none" stroke="#777" stroke-width="1.100"/></svg>
<div class="t" style="left:40px;top:335.5px;font-size:14.6px;color:#484848">升序(<u>S</u>)</div>
<div class="t" style="left:40px;top:365.5px;font-size:14.6px;color:#484848">降序(<u>O</u>)</div>
<div class="t" style="left:40px;top:394.3px;font-size:14.6px;color:#484848"><span style="letter-spacing:.25px">其他排序选项(<u>M</u>)...</span></div>
<div class="abs" style="left:40px;top:419px;width:287px;height:1px;background:#e2e2e2"></div>
<svg class="abs" style="left:8px;top:427px" width="20" height="18" viewBox="0 0 20 18"><path d="M0 0h12L7.500 5.500V12H4.500V5.500z" fill="#b5b5b5"/><path d="M11 10l6 6M17 10l-6 6" stroke="#b5b5b5" stroke-width="1.500"/></svg>
<div class="t" style="left:40px;top:425.8px;font-size:14.6px;color:#a6a6a6">从“<span style="letter-spacing:.55px">Recipient Country...</span>”中清除筛选(<u>C</u>)</div>
<div class="t" style="left:40px;top:455.3px;font-size:14.6px;color:#484848">标签筛选(<u>L</u>)</div>
<svg class="abs" style="left:311px;top:460px" width="5" height="10" viewBox="0 0 5 10"><path d="M0 0v9l4.500-4.500z" fill="#666"/></svg>
<div class="abs" style="left:2px;top:480px;width:325px;height:29px;background:#c6c6c6"></div>
<div class="t" style="left:40px;top:484.8px;font-size:14.6px;color:#262626">值筛选(<u>V</u>)</div>
<svg class="abs" style="left:311px;top:490px" width="5" height="10" viewBox="0 0 5 10"><path d="M0 0v9l4.500-4.500z" fill="#444"/></svg>
<div class="abs" style="left:38px;top:516px;width:282px;height:23px;background:#fff;border:1px solid #ababab"></div>
<div class="t" style="left:40px;top:517px;font-size:14.500px;color:#777">搜索</div>
<svg class="abs" style="left:300px;top:519px" width="17" height="17" viewBox="0 0 17 17"><circle cx="10.500" cy="6.500" r="4.800" fill="none" stroke="#2b6cc4" stroke-width="1.600"/><path d="M7 10l-5.500 5.500" stroke="#2b6cc4" stroke-width="2"/></svg>
<div class="abs" style="left:38px;top:545px;width:282px;height:205px;background:#fff;border:1px solid #e3e3e3;overflow:hidden">
<div class="abs" style="left:10px;top:10px;width:0;height:200px;border-left:1px dotted #999"></div>
<div class="abs" style="left:11px;top:9.8px;width:8px;height:0;border-top:1px dotted #999"></div>
<div class="abs" style="left:19px;top:2.8px;width:12px;height:12px;background:#fff;border:1px solid #666"></div>
<svg class="abs" style="left:21px;top:4.8px" width="9" height="9" viewBox="0 0 9 9"><path d="M1.500 4.500l2 2L7.500 2" fill="none" stroke="#111" stroke-width="1.700"/></svg>
<div class="t" style="left:35px;top:-0.2px;font-size:15px;color:#1a1a1a;letter-spacing:.45px">(全选)</div>
<div class="abs" style="left:11px;top:30.9px;width:8px;height:0;border-top:1px dotted #999"></div>
<div class="abs" style="left:19px;top:23.9px;width:12px;height:12px;background:#fff;border:1px solid #666"></div>
<svg class="abs" style="left:21px;top:25.9px" width="9" height="9" viewBox="0 0 9 9"><path d="M1.500 4.500l2 2L7.500 2" fill="none" stroke="#111" stroke-width="1.700"/></svg>
<div class="t" style="left:35px;top:20.9px;font-size:15px;color:#1a1a1a;letter-spacing:.45px">Afghanistan</div>
<div class="abs" style="left:11px;top:52.0px;width:8px;height:0;border-top:1px dotted #999"></div>
<div class="abs" style="left:19px;top:45.0px;width:12px;height:12px;background:#fff;border:1px solid #666"></div>
<svg class="abs" style="left:21px;top:47.0px" width="9" height="9" viewBox="0 0 9 9"><path d="M1.500 4.500l2 2L7.500 2" fill="none" stroke="#111" stroke-width="1.700"/></svg>
<div class="t" style="left:35px;top:42.0px;font-size:15px;color:#1a1a1a;letter-spacing:.45px">Albania</div>
<div class="abs" style="left:11px;top:73.1px;width:8px;height:0;border-top:1px dotted #999"></div>
<div class="abs" style="left:19px;top:66.1px;width:12px;height:12px;background:#fff;border:1px solid #666"></div>
<svg class="abs" style="left:21px;top:68.1px" width="9" height="9" viewBox="0 0 9 9"><path d="M1.500 4.500l2 2L7.500 2" fill="none" stroke="#111" stroke-width="1.700"/></svg>
<div class="t" style="left:35px;top:63.1px;font-size:15px;color:#1a1a1a;letter-spacing:.45px">Algeria</div>
<div class="abs" style="left:11px;top:94.2px;width:8px;height:0;border-top:1px dotted #999"></div>
<div class="abs" style="left:19px;top:87.2px;width:12px;height:12px;background:#fff;border:1px solid #666"></div>
<svg class="abs" style="left:21px;top:89.2px" width="9" height="9" viewBox="0 0 9 9"><path d="M1.500 4.500l2 2L7.500 2" fill="none" stroke="#111" stroke-width="1.700"/></svg>
<div class="t" style="left:35px;top:84.2px;font-size:15px;color:#1a1a1a;letter-spacing:.45px">Angola</div>
<div class="abs" style="left:11px;top:115.3px;width:8px;height:0;border-top:1px dotted #999"></div>
<div class="abs" style="left:19px;top:108.3px;width:12px;height:12px;background:#fff;border:1px solid #666"></div>
<svg class="abs" style="left:21px;top:110.3px" width="9" height="9" viewBox="0 0 9 9"><path d="M1.500 4.500l2 2L7.500 2" fill="none" stroke="#111" stroke-width="1.700"/></svg>
<div class="t" style="left:35px;top:105.3px;font-size:15px;color:#1a1a1a;letter-spacing:.45px">Anguilla</div>
<div class="abs" style="left:11px;top:136.4px;width:8px;height:0;border-top:1px dotted #999"></div>
<div class="abs" style="left:19px;top:129.4px;width:12px;height:12px;background:#fff;border:1px solid #666"></div>
<svg class="abs" style="left:21px;top:131.4px" width="9" height="9" viewBox="0 0 9 9"><path d="M1.500 4.500l2 2L7.500 2" fill="none" stroke="#111" stroke-width="1.700"/></svg>
<div class="t" style="left:35px;top:126.4px;font-size:15px;color:#1a1a1a;letter-spacing:.45px">Antigua Barb</div>
<div class="abs" style="left:11px;top:157.5px;width:8px;height:0;border-top:1px dotted #999"></div>
<div class="abs" style="left:19px;top:150.5px;width:12px;height:12px;background:#fff;border:1px solid #666"></div>
<svg class="abs" style="left:21px;top:152.5px" width="9" height="9" viewBox="0 0 9 9"><path d="M1.500 4.500l2 2L7.500 2" fill="none" stroke="#111" stroke-width="1.700"/></svg>
<div class="t" style="left:35px;top:147.5px;font-size:15px;color:#1a1a1a;letter-spacing:.45px">Argentina</div>
<div class="abs" style="left:11px;top:178.6px;width:8px;height:0;border-top:1px dotted #999"></div>
<div class="abs" style="left:19px;top:171.6px;width:12px;height:12px;background:#fff;border:1px solid #666"></div>
<svg class="abs" style="left:21px;top:173.6px" width="9" height="9" viewBox="0 0 9 9"><path d="M1.500 4.500l2 2L7.500 2" fill="none" stroke="#111" stroke-width="1.700"/></svg>
<div class="t" style="left:35px;top:168.6px;font-size:15px;color:#1a1a1a;letter-spacing:.45px">Armenia</div>
<div class="abs" style="left:11px;top:199.7px;width:8px;height:0;border-top:1px dotted #999"></div>
<div class="abs" style="left:19px;top:192.7px;width:12px;height:12px;background:#fff;border:1px solid #666"></div>
<svg class="abs" style="left:21px;top:194.7px" width="9" height="9" viewBox="0 0 9 9"><path d="M1.500 4.500l2 2L7.500 2" fill="none" stroke="#111" stroke-width="1.700"/></svg>
<div class="t" style="left:35px;top:189.7px;font-size:15px;color:#1a1a1a;letter-spacing:.45px">Austria</div>
<div class="abs" style="left:258px;top:0;width:22px;height:203px;background:#f0f0f0"></div>
<svg class="abs" style="left:263px;top:7px" width="12" height="8" viewBox="0 0 12 8"><path d="M1 7l5-5 5 5" fill="none" stroke="#555" stroke-width="1.800"/></svg>
<div class="abs" style="left:259px;top:21px;width:20px;height:20px;background:#c8c8c8"></div>
<svg class="abs" style="left:263px;top:188px" width="12" height="8" viewBox="0 0 12 8"><path d="M1 1l5 5 5-5" fill="none" stroke="#555" stroke-width="1.800"/></svg>
</div>
<div class="abs" style="left:125px;top:779px;width:90px;height:30px;background:#e1e1e1;border:1px solid #adadad"></div>
<div class="t" style="left:125px;top:784px;width:90px;text-align:center;font-size:15px;color:#222">确定</div>
<div class="abs" style="left:228px;top:779px;width:91px;height:30px;background:#e1e1e1;border:1px solid #adadad"></div>
<div class="t" style="left:228px;top:784px;width:91px;text-align:center;font-size:15px;color:#222">取消</div>
<div class="abs" style="left:2px;top:814px;width:325px;height:1px;background:#dfe6ee"></div>
<div class="abs" style="left:2px;top:815px;width:325px;height:12px;background:linear-gradient(#fff 0%,#fff 35%,#e8e8ec 100%)"></div>
<div class="abs" style="left:321px;top:818px;width:2px;height:2px;background:#999;box-shadow:0 4px 0 #999,-4px 4px 0 #999"></div>
<div class="abs" style="left:32px;top:329px;width:164px;height:1px;background:#217346"></div>
<div class="abs" style="left:32px;top:328px;width:164px;height:1px;background:#217346;opacity:.35"></div>
<div class="abs" style="left:327px;top:480px;width:174px;height:306px;background:#fff;border:1px solid #c6c6c6;box-shadow:1px 1px 3px rgba(0,0,0,.22)"></div>
<svg class="abs" style="left:334px;top:488px" width="20" height="18" viewBox="0 0 20 18"><path d="M0 0h12L7.500 5.500V12H4.500V5.500z" fill="#b5b5b5"/><path d="M11 10l6 6M17 10l-6 6" stroke="#b5b5b5" stroke-width="1.500"/></svg>
<div class="t" style="left:367px;top:487.0px;font-size:14.6px;color:#a6a6a6">清除筛选(<u>C</u>)</div>
<div class="abs" style="left:367px;top:512px;width:133px;height:1px;background:#e2e2e2"></div>
<div class="t" style="left:367px;top:518.8px;font-size:14.6px;color:#484848">等于(<u>E</u>)<span style="letter-spacing:-1.2px">...</span></div>
<div class="t" style="left:367px;top:549.3px;font-size:14.6px;color:#484848">不等于(<u>N</u>)<span style="letter-spacing:-1.2px">...</span></div>
<div class="abs" style="left:367px;top:573px;width:133px;height:1px;background:#e2e2e2"></div>
<div class="t" style="left:367px;top:579.8px;font-size:14.6px;color:#484848">大于(<u>G</u>)<span style="letter-spacing:-1.2px">...</span></div>
<div class="t" style="left:367px;top:609.5px;font-size:14.6px;color:#484848">大于或等于(<u>O</u>)<span style="letter-spacing:-1.2px">...</span></div>
<div class="t" style="left:367px;top:638.6px;font-size:14.6px;color:#484848">小于(<u>L</u>)<span style="letter-spacing:-1.2px">...</span></div>
<div class="t" style="left:367px;top:667.8px;font-size:14.6px;color:#484848">小于或等于(<u>Q</u>)<span style="letter-spacing:-1.2px">...</span></div>
<div class="abs" style="left:367px;top:692px;width:133px;height:1px;background:#e2e2e2"></div>
<div class="t" style="left:367px;top:698.8px;font-size:14.6px;color:#484848">介于(<u>W</u>)<span style="letter-spacing:-1.2px">...</span></div>
<div class="t" style="left:367px;top:729.3px;font-size:14.6px;color:#484848">不介于(<u>B</u>)<span style="letter-spacing:-1.2px">...</span></div>
<div class="abs" style="left:367px;top:753px;width:133px;height:1px;background:#e2e2e2"></div>
<div class="abs" style="left:329px;top:756px;width:171px;height:28px;background:#c6c6c6"></div>
<div class="t" style="left:367px;top:760.6px;font-size:14.6px;color:#262626">前 10 项(<u>T</u>)<span style="letter-spacing:-1.2px">...</span></div>
<svg class="abs" style="left:0;top:0" width="1567" height="833" viewBox="0 0 1567 833"><polygon points="114.800,494.400 132.200,484.900 129.800,490 243,496.700 243,497.900 129.100,499.800 131.200,504.400" fill="#fb1d12"/><polygon points="464.700,764.500 477.600,748.100 476.600,753.400 611.300,704.500 612,706 479.900,763.700 483.900,766.800" fill="#fb1d12"/></svg>
<!--MENU-E-->
</body></html>
